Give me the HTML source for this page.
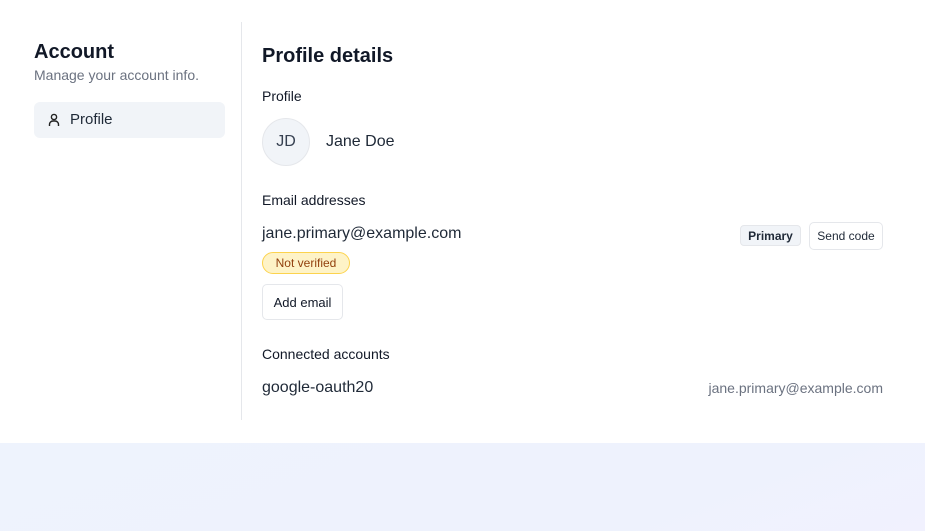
<!DOCTYPE html>
<html><head><meta charset="utf-8"><style>
*{margin:0;padding:0;box-sizing:border-box}
body{width:925px;height:531px;overflow:hidden;background:#fff;font-family:"Liberation Sans",sans-serif;color:#111827;position:relative}
.a{position:absolute;white-space:nowrap}
.bottom{position:absolute;left:0;top:443px;width:925px;height:88px;background:linear-gradient(160deg,#eef3fd 0%,#eef2fd 70%,#f1f1fe 100%)}
</style></head><body>
<div class="a" style="left:34px;top:41px;font-size:20px;font-weight:bold;">Account</div>
<div class="a" style="left:34px;top:67px;font-size:14px;color:#6b7280;">Manage your account info.</div>
<div class="a" style="left:34px;top:102px;width:191px;height:36px;background:#f1f4f8;border-radius:6px;"></div>
<svg class="a" style="left:47px;top:112px" width="14" height="16" viewBox="0 0 14 16" fill="none" stroke="#222" stroke-width="1.4"><circle cx="7" cy="5" r="2.6"/><path d="M2.5 14v-1.5a3.5 3.5 0 0 1 3.5-3.5h2a3.5 3.5 0 0 1 3.5 3.5V14"/></svg>
<div class="a" style="left:70px;top:111px;font-size:15px;color:#1f2937;">Profile</div>
<div class="a" style="left:241px;top:22px;width:1px;height:398px;background:#e5e7eb;"></div>
<div class="a" style="left:262px;top:45px;font-size:20px;font-weight:bold;">Profile details</div>
<div class="a" style="left:262px;top:88px;font-size:14px;">Profile</div>
<div class="a" style="left:262px;top:118px;width:48px;height:48px;border-radius:50%;background:#f1f4f8;border:1px solid #e5e7eb;font-size:16px;color:#374151;line-height:46px;text-align:center;">JD</div>
<div class="a" style="left:326px;top:133px;font-size:16px;color:#1f2937;">Jane Doe</div>
<div class="a" style="left:262px;top:192px;font-size:14px;">Email addresses</div>
<div class="a" style="left:262px;top:225px;font-size:16px;color:#1f2937;">jane.primary@example.com</div>
<div class="a" style="left:262px;top:252px;width:88px;height:22px;border-radius:11px;background:#fef3c7;border:1px solid #fcd34d;font-size:12px;color:#92400e;line-height:20px;text-align:center;">Not verified</div>
<div class="a" style="left:740px;top:225px;width:61px;height:21px;border-radius:4px;background:#f1f4f8;border:1px solid #e5e7eb;font-size:12px;font-weight:bold;color:#1f2937;line-height:20px;text-align:center;">Primary</div>
<div class="a" style="left:809px;top:222px;width:74px;height:28px;border-radius:5px;background:#fff;border:1px solid #e5e7eb;font-size:12px;color:#1f2937;line-height:27px;text-align:center;">Send code</div>
<div class="a" style="left:262px;top:284px;width:81px;height:36px;border-radius:5px;background:#fff;border:1px solid #e5e7eb;font-size:13px;color:#111827;line-height:35px;text-align:center;">Add email</div>
<div class="a" style="left:262px;top:346px;font-size:14px;">Connected accounts</div>
<div class="a" style="left:262px;top:379px;font-size:16px;color:#1f2937;">google-oauth20</div>
<div class="a" style="right:42px;top:380px;font-size:14px;color:#6b7280;">jane.primary@example.com</div>
<div class="bottom"></div>
</body></html>
